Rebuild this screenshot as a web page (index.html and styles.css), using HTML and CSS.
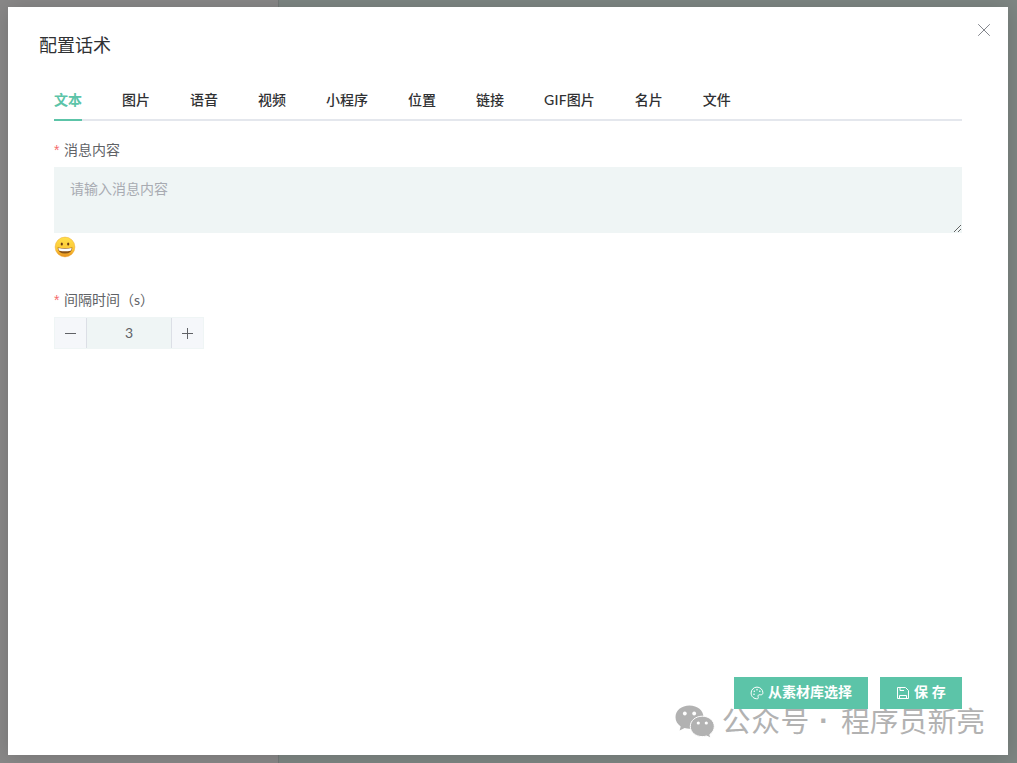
FILE: index.html
```html
<!DOCTYPE html>
<html lang="zh-CN">
<head>
  <meta charset="UTF-8">
  <title>配置话术</title>
  <link rel="stylesheet" href="styles.css">
</head>
<body>
<div class="dialog">
  <button class="dialog-close" type="button" aria-label="关闭">
    <svg viewBox="0 0 14 14" width="14" height="14"><path d="M1.2 1.2l11.6 11.6M12.8 1.2L1.2 12.8"/></svg>
  </button>
  <div class="dialog-title">配置话术</div>

  <form class="dialog-body">
    <div class="tabs">
      <div class="tab active">文本</div>
      <div class="tab">图片</div>
      <div class="tab">语音</div>
      <div class="tab">视频</div>
      <div class="tab">小程序</div>
      <div class="tab">位置</div>
      <div class="tab">链接</div>
      <div class="tab"><span class="latin gif">GIF</span>图片</div>
      <div class="tab">名片</div>
      <div class="tab">文件</div>
    </div>

    <label class="label" for="content">消息内容</label>
    <textarea id="content" class="textarea" placeholder="请输入消息内容"></textarea>
    <svg class="emoji" viewBox="0 0 22 22" width="22" height="22">
      <defs>
        <linearGradient id="face" x1="0" y1="0" x2="0" y2="1">
          <stop offset="0" stop-color="#ffe04a"/>
          <stop offset=".6" stop-color="#fdc936"/>
          <stop offset="1" stop-color="#e8901f"/>
        </linearGradient>
      </defs>
      <circle cx="11" cy="11" r="9.9" fill="url(#face)" stroke="#eda72c" stroke-width=".5"/>
      <ellipse cx="7.8" cy="8" rx="1.1" ry="1.5" fill="#6b3c12"/>
      <ellipse cx="14.2" cy="8" rx="1.1" ry="1.5" fill="#6b3c12"/>
      <path d="M3.6 11.4Q11 13 18.4 11.4Q18 17.4 11 17.4T3.6 11.4z" fill="#8a5214"/>
      <path d="M4.3 12Q11 13.4 17.7 12Q17.5 14.6 16.5 14.8Q11 15.8 5.5 14.8Q4.5 14.6 4.3 12z" fill="#fff"/>
    </svg>

    <label class="label label-time">间隔时间（<span class="latin">s</span>）</label>
    <div class="number">
      <button class="step" type="button" aria-label="减少">
        <svg viewBox="0 0 12 12" width="12" height="12"><path d="M0 6.5h11"/></svg>
      </button>
      <div class="number-value">3</div>
      <button class="step step-plus" type="button" aria-label="增加">
        <svg viewBox="0 0 12 12" width="12" height="12"><path d="M0 6.5h11M5.5 1v11"/></svg>
      </button>
    </div>
  </form>

  <div class="dialog-footer">
    <button class="button" type="button">
      <svg viewBox="0 0 14 14" width="14" height="14">
        <path d="M7.7 12.7C3.8 13.2 1.1 10.4 1.1 7C1.1 3.7 3.7 1.1 7 1.1S12.9 3.7 12.9 6.8C12.9 8.5 11.8 9 10.2 8.8C8.6 8.6 7.6 9.2 8.1 10.8C8.4 11.7 8.5 12.4 7.7 12.7z"/>
        <g class="dots"><circle cx="4" cy="8.2" r=".8"/><circle cx="4.3" cy="5.2" r=".8"/><circle cx="7" cy="3.7" r=".8"/><circle cx="9.8" cy="5.3" r=".8"/></g>
      </svg>
      <span>从素材库选择</span>
    </button>
    <button class="button button-save" type="button">
      <svg viewBox="0 0 14 14" width="14" height="14"><path d="M1.5 1.5h8L12.5 4.5v8h-11zM3.5 12.5V9.5h7v3M4 1.5v3h4"/></svg>
      <span>保 存</span>
    </button>
  </div>

  <div class="watermark">
    <svg viewBox="0 0 40 33" width="40" height="33">
      <path d="M14.5.5C6.5.5.5 5.6.5 12.2c0 3.8 2 7 5.2 9.2L4.6 25.6l5-2.5c1.6.5 3.2.7 4.9.7 8 0 14-5 14-11.6S22.5.5 14.5.5z"/>
      <path class="front" d="M27.3 11.2c-6.8 0-12 4.5-12 10.2s5.2 10.2 12 10.2c1.5 0 2.9-.2 4.2-.6l4.3 2-1-3.5c2.8-1.9 4.5-4.8 4.5-8.1 0-5.7-5.2-10.2-12-10.2z"/>
      <g class="eyes"><circle cx="9.8" cy="8.5" r="1.9"/><circle cx="19.2" cy="8.5" r="1.9"/><circle cx="23.3" cy="18" r="1.6"/><circle cx="31.3" cy="18" r="1.6"/></g>
    </svg>
    <span class="watermark-text watermark-kind">公众号</span>
    <span class="watermark-dot">·</span>
    <span class="watermark-text">程序员新亮</span>
  </div>
</div>
</body>
</html>
```
FILE: styles.css
```css
* {
  box-sizing: border-box;
}

body {
  margin: 0;
  height: 763px;
  padding: 7px 9px 8px 8px;
  overflow: hidden;
  background: linear-gradient(to right, #898888 278px, #747978 278px, #747978 279px, #7e8683 279px);
  font-family: "Noto Sans CJK SC", sans-serif;
  font-size: 14px;
  color: #303133;
}

button {
  border: 0;
  padding: 0;
  font: inherit;
}

svg {
  display: block;
  fill: none;
  stroke: currentColor;
}

.latin,
.number-value {
  font-family: Lato, sans-serif;
}

.gif {
  letter-spacing: .25px;
}

.dialog {
  position: relative;
  display: flex;
  flex-direction: column;
  height: 748px;
  background: #fff;
  box-shadow: 0 1px 20px rgba(0, 0, 0, .16);
}

.dialog-close {
  position: absolute;
  top: 16px;
  right: 17px;
  background: none;
  color: #83868d;
}

.dialog-title {
  padding: 25px 31px 0;
  font-size: 18px;
  line-height: 24px;
}

.dialog-body {
  flex: 1;
  padding: 24px 46px 0;
}

.tabs {
  display: flex;
  gap: 40px;
  height: 41px;
  border-bottom: 2px solid #e4e7ed;
  font-weight: 500;
  line-height: 38px;
}

.tab {
  height: 41px;
}

.tab.active {
  border-bottom: 2px solid #5cc4a8;
  color: #5cc4a8;
  font-weight: 700;
}

.label {
  display: block;
  margin-top: 17px;
  line-height: 22px;
  color: #606266;
}

.label:before {
  content: "*";
  margin-right: 4.5px;
  font-family: "Liberation Sans", sans-serif;
  color: #f56c6c;
}

.textarea {
  display: block;
  width: 100%;
  height: 66px;
  margin-top: 6px;
  padding: 11px 16px;
  border: 0;
  background: #eff5f5;
  font: inherit;
  line-height: 21px;
  resize: vertical;
}

.textarea::placeholder {
  color: #a8abb2;
}

.emoji {
  margin-top: 3px;
  stroke: none;
}

.label-time {
  margin-top: 30px;
}

.number {
  display: flex;
  width: 150px;
  height: 32px;
  margin-top: 6px;
  border: 1px solid #eff5f5;
  background: #eff5f5;
  color: #606266;
}

.step {
  display: flex;
  width: 32px;
  align-items: center;
  justify-content: center;
  border-right: 1px solid #dcdfe6;
  background: #f5f7fa;
  color: #606266;
}

.step-plus {
  border-right: 0;
  border-left: 1px solid #dcdfe6;
}

.number-value {
  flex: 1;
  line-height: 30px;
  text-align: center;
}

.dialog-footer {
  position: relative;
  z-index: 1;
  display: flex;
  justify-content: flex-end;
  gap: 12px;
  padding: 0 46px 46px;
}

.button {
  display: flex;
  align-items: center;
  gap: 4px;
  height: 32px;
  padding: 0 16px;
  background: #5cc4a8;
  color: #fff;
  font-weight: 700;
  white-space: nowrap;
}

.button svg {
  flex: none;
}

.button span {
  padding-bottom: 4px;
  line-height: 20px;
}

.button-save {
  width: 82px;
  word-spacing: .5px;
}

.button .dots {
  fill: currentColor;
  stroke: none;
}

.watermark {
  position: absolute;
  right: 23px;
  bottom: 14px;
  display: flex;
  align-items: center;
  font-size: 28.8px;
  line-height: 38px;
  color: #b2b2b2;
}

.watermark svg {
  margin-right: 7px;
  fill: currentColor;
  stroke: none;
}

.watermark .front {
  stroke: #fff;
  stroke-width: 1;
}

.watermark .eyes {
  fill: #fff;
}

.watermark-text {
  padding-bottom: 2px;
}

.watermark-kind {
  letter-spacing: .6px;
}

.watermark-dot {
  width: 31px;
  padding-right: 3px;
  font-family: "Liberation Sans", sans-serif;
  font-weight: 700;
  text-align: center;
}
```
